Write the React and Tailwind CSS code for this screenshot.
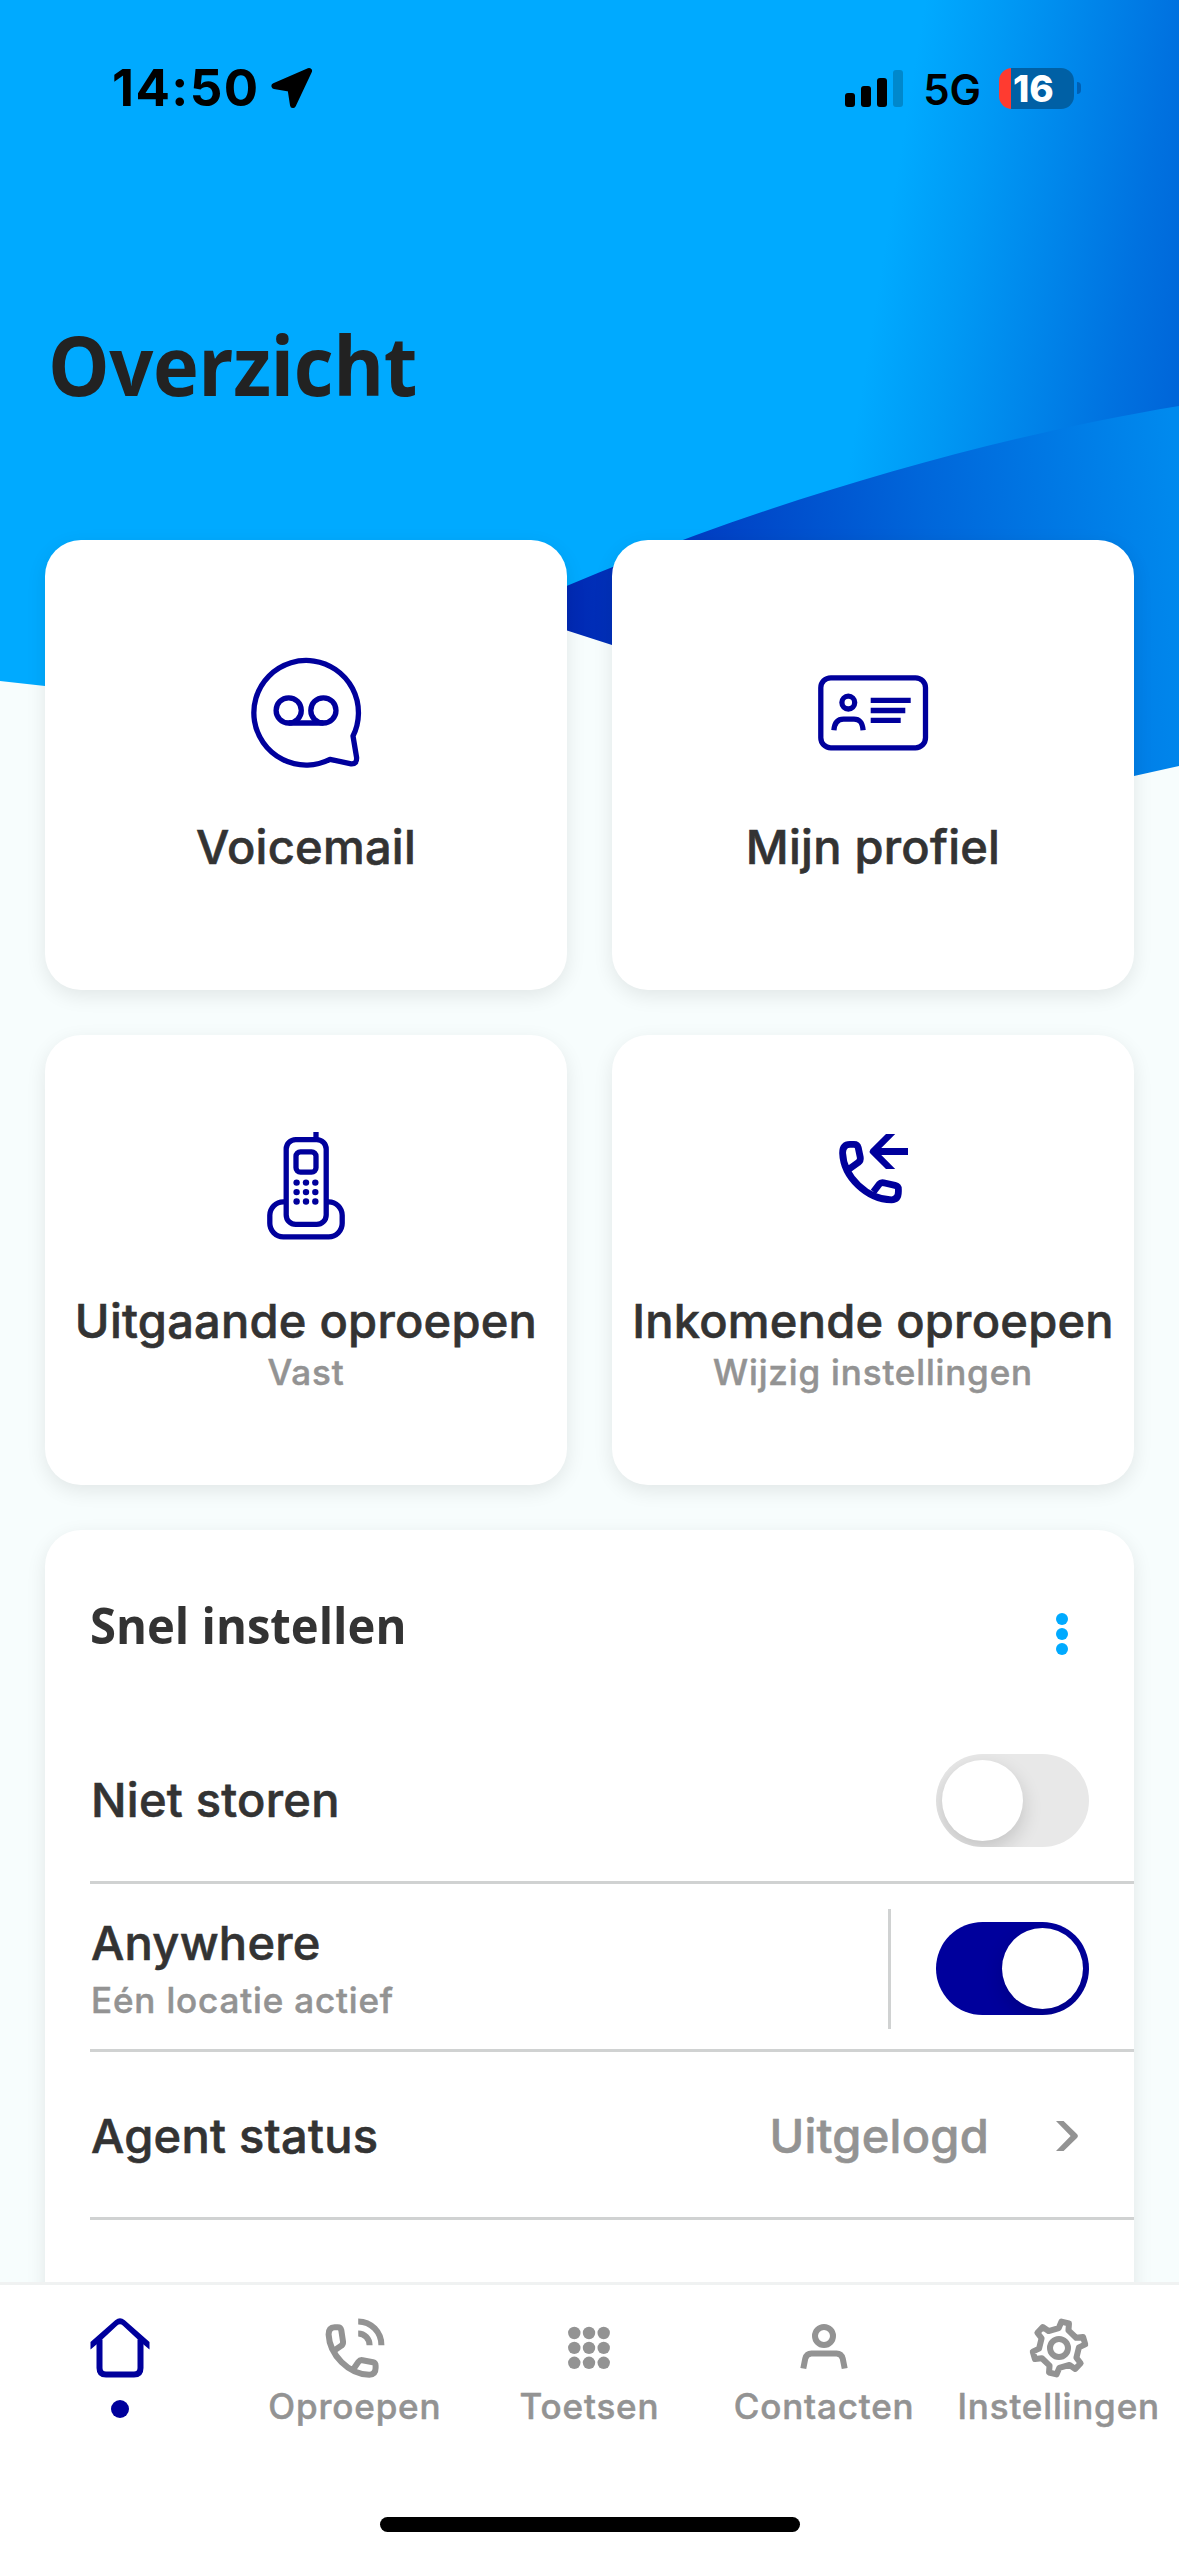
import React, { useState } from "react";

const VoicemailIcon = () => (
  <svg viewBox="0 0 120 120" className="w-[120px] h-[120px]" fill="none" stroke="#00009c" strokeWidth="5.3">
    <path
      d="M107 83A52.3 52.3 0 1 0 84 106.3L105.2 110.9Q111 111.3 110.6 104.5Z"
      strokeLinejoin="round"
    />
    <circle cx="42.7" cy="57.4" r="12.6" />
    <circle cx="77.4" cy="57.4" r="12.6" />
    <path d="M42.7 70H77.4" />
  </svg>
);

const ProfileIcon = () => (
  <svg viewBox="0 0 120 120" className="w-[120px] h-[120px]" fill="none" stroke="#00009c" strokeWidth="5.3">
    <rect x="7.8" y="24.8" width="104.7" height="70" rx="10" />
    <circle cx="35.3" cy="49.6" r="6.4" />
    <path d="M20.9 77.3C21.5 69 25 66.1 30.5 66.1H41C46.5 66.1 49.4 69 50.1 77.3" />
    <path d="M57.7 47.3H97.7M57.7 57.5H92.3M57.7 67.3H87.7" />
  </svg>
);

const HandsetIcon = () => (
  <svg viewBox="0 0 120 120" className="w-[120px] h-[120px]" fill="none" stroke="#00009c" strokeWidth="5.3">
    <rect x="40.2" y="12.6" width="40" height="84.8" rx="9.5" />
    <rect x="50" y="24.8" width="20" height="20.4" rx="4.5" />
    <path d="M70 5V13" />
    <path d="M40.2 74.8H37.3A13.5 13.5 0 0 0 23.8 88.3V96.3A13.5 13.5 0 0 0 37.3 109.8H82.7A13.5 13.5 0 0 0 96.2 96.3V88.3A13.5 13.5 0 0 0 82.7 74.8H80.2" />
    <g fill="#00009c" stroke="none">
      {[55.6, 65.1, 74.5].map((y) =>
        [50.6, 60, 69.3].map((x) => <circle key={`${x}-${y}`} cx={x} cy={y} r="3.2" />)
      )}
    </g>
  </svg>
);

const IncomingIcon = () => (
  <svg viewBox="0 0 120 120" className="w-[120px] h-[120px]" fill="none" stroke="#00009c" strokeWidth="6.8">
    <path
      d="M36.5 41.8L45.2 35.6Q47.8 33.5 47.3 30.5L45.2 20.5Q44.4 17.4 41 17.4H37Q29.6 17.6 29.6 26C30.5 50 54 72.3 78.5 72.8Q85.4 72.6 85.4 64.5V62.2Q85.4 59 82 58.3L70.5 55.8Q67.8 55.3 66.2 57.2L60.5 64.8"
      strokeLinejoin="round"
    />
    <path d="M95 24.5H62" strokeWidth="7.2" />
    <path d="M73 7H82.2L64.8 24.5L82.2 42H73L57.4 26.6Q55.8 24.5 57.4 22.4Z" fill="#00009c" stroke="none" />
  </svg>
);

const HomeIcon = () => (
  <svg viewBox="0 0 60 60" className="w-[60px] h-[60px]" fill="none" stroke="currentColor" strokeWidth="6">
    <path d="M9.5 21.5V50Q9.5 56.6 16 56.6H44Q50.5 56.6 50.5 50V21.5" />
    <path d="M0.5 24V31.5L9.5 24L27.2 7.4Q30 5 32.8 7.4L50.5 24L59.5 31.5V24L34.8 2.2Q30 -1.6 25.2 2.2Z" fill="currentColor" stroke="none" />
  </svg>
);

const CallsIcon = () => (
  <svg viewBox="0 0 60 60" className="w-[60px] h-[60px]" fill="none" stroke="currentColor" strokeWidth="6">
    <path
      d="M9.3 32.5L16.5 27.6Q18.4 26 18 23.4L16.3 12.2Q15.6 9.3 12.8 9.3H9.7Q3.6 9.5 3.6 16.5C4.6 37 23.5 56 44.3 56.8Q50.6 56.5 50.6 50V47.6Q50.6 44.8 48 44.2L37.5 42.2Q35 41.8 33.5 43.8L29 50.2"
      strokeLinejoin="round"
    />
    <path d="M33.2 3.4A23.2 23.6 0 0 1 56.4 27.3M33.2 15.4A11.4 11.9 0 0 1 44.6 27.3" />
  </svg>
);

const KeypadIcon = () => (
  <svg viewBox="0 0 60 60" className="w-[60px] h-[60px]" fill="currentColor">
    {[15, 29.9, 44.8].map((y) =>
      [15.3, 30, 44.7].map((x) => <circle key={`${x}-${y}`} cx={x} cy={y} r="6.2" />)
    )}
  </svg>
);

const ContactsIcon = () => (
  <svg viewBox="0 0 60 60" className="w-[60px] h-[60px]" fill="none" stroke="currentColor" strokeWidth="6">
    <circle cx="30" cy="18" r="9" />
    <path d="M9.3 50.5L11.3 40.5Q12.7 35.5 17.5 35.5H42.5Q47.3 35.5 48.7 40.5L50.7 50.5" />
  </svg>
);

const GearIcon = () => {
  const punten = [13.7, 73.7, 133.7, 193.7, 253.7, 313.7]
    .map((hoek) => {
      const r = (hoek * Math.PI) / 180;
      return [[-5, -19.3], [-3.9, -26.2], [3.9, -26.2], [5, -19.3]]
        .map(([x, y]) =>
          `${(30 + x * Math.cos(r) - y * Math.sin(r)).toFixed(2)},${(30 + x * Math.sin(r) + y * Math.cos(r)).toFixed(2)}`
        )
        .join(" ");
    })
    .join(" ");

  return (
    <svg viewBox="0 0 60 60" className="w-[60px] h-[60px]" fill="none" stroke="currentColor" strokeWidth="6">
      <polygon points={punten} strokeLinejoin="round" />
      <circle cx="30" cy="30" r="9" />
    </svg>
  );
};

const tegels = [
  { label: "Voicemail", icon: VoicemailIcon },
  { label: "Mijn profiel", icon: ProfileIcon },
  { label: "Uitgaande oproepen", sub: "Vast", icon: HandsetIcon },
  { label: "Inkomende oproepen", sub: "Wijzig instellingen", icon: IncomingIcon },
];

const tabs = [
  { label: "Home", icon: HomeIcon },
  { label: "Oproepen", icon: CallsIcon },
  { label: "Toetsen", icon: KeypadIcon },
  { label: "Contacten", icon: ContactsIcon },
  { label: "Instellingen", icon: GearIcon },
];

// tussen medium en semibold in
const tekst = "text-[47px] leading-[60px] font-medium tracking-[0.25px] [-webkit-text-stroke:0.6px]";
const subTekst =
  "text-[35px] leading-[42px] font-medium tracking-[0.85px] [-webkit-text-stroke:0.5px]";

function Achtergrond() {
  return (
    <svg className="absolute top-0 left-0" width="1179" height="800" viewBox="0 0 1179 800">
      <defs>
        <linearGradient id="hoek" gradientUnits="userSpaceOnUse" x1="925" y1="0" x2="1231" y2="50">
          <stop offset="0" stopColor="#00aaff" />
          <stop offset="0.25" stopColor="#009af5" />
          <stop offset="0.8" stopColor="#0072e0" />
          <stop offset="1" stopColor="#0066d9" />
        </linearGradient>
        <linearGradient id="golf" gradientUnits="userSpaceOnUse" x1="550" y1="640" x2="1190" y2="560">
          <stop offset="0" stopColor="#0026b2" />
          <stop offset="0.25" stopColor="#003fc4" />
          <stop offset="0.6" stopColor="#0066da" />
          <stop offset="1" stopColor="#008aee" />
        </linearGradient>
      </defs>
      <path d="M0 0H1179V430L567 625Q300 735 45 686L0 681Z" fill="url(#hoek)" />
      <path
        d="M500 616C700 522 960 442 1179 406V766L1134 776C1090 782 1050 778 1000 770C850 750 700 675 612 645L500 609Z"
        fill="url(#golf)"
      />
    </svg>
  );
}

function StatusBar() {
  return (
    <div className="flex h-[176px] items-center pl-[112px] pr-[98px] text-black">
      <span className="text-[51px] font-bold tracking-[1.4px]">14:50</span>
      <svg viewBox="0 0 42 42" className="ml-[11px] h-[42px] w-[42px]">
        <path
          d="M38 4L3.5 19L19.5 21.8L22 38Z"
          fill="#000"
          stroke="#000"
          strokeWidth="6"
          strokeLinejoin="round"
        />
      </svg>
      <div className="ml-auto flex items-center">
        <div className="flex h-[37px] items-end gap-[6px]">
          <div className="h-[14px] w-[10px] rounded-[3px] bg-black" />
          <div className="h-[21px] w-[10px] rounded-[3px] bg-black" />
          <div className="h-[29px] w-[10px] rounded-[3px] bg-black" />
          <div className="h-[37px] w-[10px] rounded-[3px] bg-black/20" />
        </div>
        <span className="ml-[20px] mt-[3px] text-[42px] font-semibold">5G</span>
        <div className="ml-[18px] flex h-[41px] w-[75px] items-center rounded-[13px] bg-[linear-gradient(90deg,#ff3b30_12px,#0060a5_12px)] pl-[14px]">
          <span className="text-[37px] leading-[41px] font-extrabold text-white">16</span>
        </div>
        <div className="ml-[3px] h-[12px] w-[4px] rounded-r-full bg-[#0060b4]" />
      </div>
    </div>
  );
}

function Schakelaar({ aan, onChange }) {
  return (
    <button
      type="button"
      role="switch"
      aria-checked={aan}
      onClick={() => onChange(!aan)}
      className={`flex h-[93px] w-[153px] items-center overflow-hidden rounded-full px-[6px] ${
        aan ? "justify-end bg-[#00009c]" : "justify-start bg-[#e8e8e8]"
      }`}
    >
      <span className="h-[81px] w-[81px] rounded-full bg-white shadow-[0_8px_20px_rgba(0,0,0,0.16)]" />
    </button>
  );
}

export default function App() {
  const [nietStoren, setNietStoren] = useState(false);
  const [anywhere, setAnywhere] = useState(true);
  const [actief, setActief] = useState("Home");

  return (
    <div className="relative flex h-[2556px] w-[1179px] flex-col overflow-hidden bg-[#f7fdfd] font-['Inter',sans-serif] text-[#333333]">
      <Achtergrond />

      <div className="relative flex-1 overflow-hidden">
        <StatusBar />

        <h1 className="mt-[138px] mb-[126px] ml-[48px] origin-left scale-x-[0.935] font-['Open_Sans',sans-serif] text-[83px] leading-[100px] font-bold tracking-[-0.5px] text-[#222222]">
          Overzicht
        </h1>

        <div className="grid grid-cols-2 gap-[45px] px-[45px]">
          {tegels.map(({ label, sub, icon: Icon }) => (
            <div
              key={label}
              className={`flex h-[450px] flex-col items-center rounded-[36px] bg-white shadow-[0_6px_20px_rgba(0,0,0,0.09)] ${
                sub ? "pt-[92px]" : "pt-[113px]"
              }`}
            >
              <Icon />
              <p className={`mt-[44px] whitespace-nowrap ${tekst}`}>{label}</p>
              {sub && <p className={`text-[#939393] ${subTekst}`}>{sub}</p>}
            </div>
          ))}
        </div>

        {/* Snel instellen */}
        <div className="mx-[45px] mt-[45px] h-[900px] rounded-[36px] bg-white pl-[45px] shadow-[0_6px_20px_rgba(0,0,0,0.09)]">
          <div className="flex h-[186px] items-start justify-between pt-[64px] pr-[45px]">
            <h2 className="origin-left scale-x-[0.925] font-['Open_Sans',sans-serif] text-[51px] leading-[60px] font-bold">
              Snel instellen
            </h2>
            <div className="mt-[19px] mr-[21px] flex flex-col gap-[2.5px]">
              <div className="h-[12.4px] w-[12.4px] rounded-full bg-[#00aaff]" />
              <div className="h-[12.4px] w-[12.4px] rounded-full bg-[#00aaff]" />
              <div className="h-[12.4px] w-[12.4px] rounded-full bg-[#00aaff]" />
            </div>
          </div>

          <div className="flex h-[168px] items-center justify-between border-b-[3px] border-[#d0d2d2] pr-[45px]">
            <span className={`pt-[2px] pl-[1px] ${tekst}`}>Niet storen</span>
            <div className="pt-[4px]">
              <Schakelaar aan={nietStoren} onChange={setNietStoren} />
            </div>
          </div>

          <div className="flex h-[168px] items-center justify-between border-b-[3px] border-[#d0d2d2] pr-[45px]">
            <div className="pl-[1px]">
              <p className={tekst}>Anywhere</p>
              <p className={`mt-[6px] text-[#939393] ${subTekst}`}>Eén locatie actief</p>
            </div>
            <div className="flex items-center pt-[4px]">
              <div className="mr-[45px] h-[120px] w-[3px] bg-[#d0d2d2]" />
              <Schakelaar aan={anywhere} onChange={setAnywhere} />
            </div>
          </div>

          <div className="flex h-[168px] items-center border-b-[3px] border-[#d0d2d2] pt-[3px] pr-[55px] pl-[1px]">
            <span className={tekst}>Agent status</span>
            <span className={`ml-auto text-[#939393] ${tekst}`}>Uitgelogd</span>
            <svg viewBox="0 0 24 32" className="ml-[66px] h-[32px] w-[24px]" fill="#939393">
              <path d="M1 1H8.6L22.2 14.2Q23.8 16 22.2 17.8L8.6 31H1L15.6 16Z" />
            </svg>
          </div>
        </div>
      </div>

      <nav className="relative h-[274px] border-t-[3px] border-[#f0f2f2] bg-white px-[3px]">
        <div className="grid h-[232px] grid-cols-5 pt-[33px]">
          {tabs.map(({ label, icon: Icon }) => (
            <button
              key={label}
              type="button"
              aria-label={label}
              onClick={() => setActief(label)}
              className={`flex flex-col items-center ${
                actief === label ? "text-[#00009c]" : "text-[#939393]"
              }`}
            >
              <Icon />
              {actief === label ? (
                <span className="mt-[22px] h-[18px] w-[18px] rounded-full bg-[#00009c]" />
              ) : (
                <span className={`mt-[7px] ${subTekst}`}>{label}</span>
              )}
            </button>
          ))}
        </div>
        <div className="mx-auto h-[15px] w-[420px] rounded-full bg-black" />
      </nav>
    </div>
  );
}
